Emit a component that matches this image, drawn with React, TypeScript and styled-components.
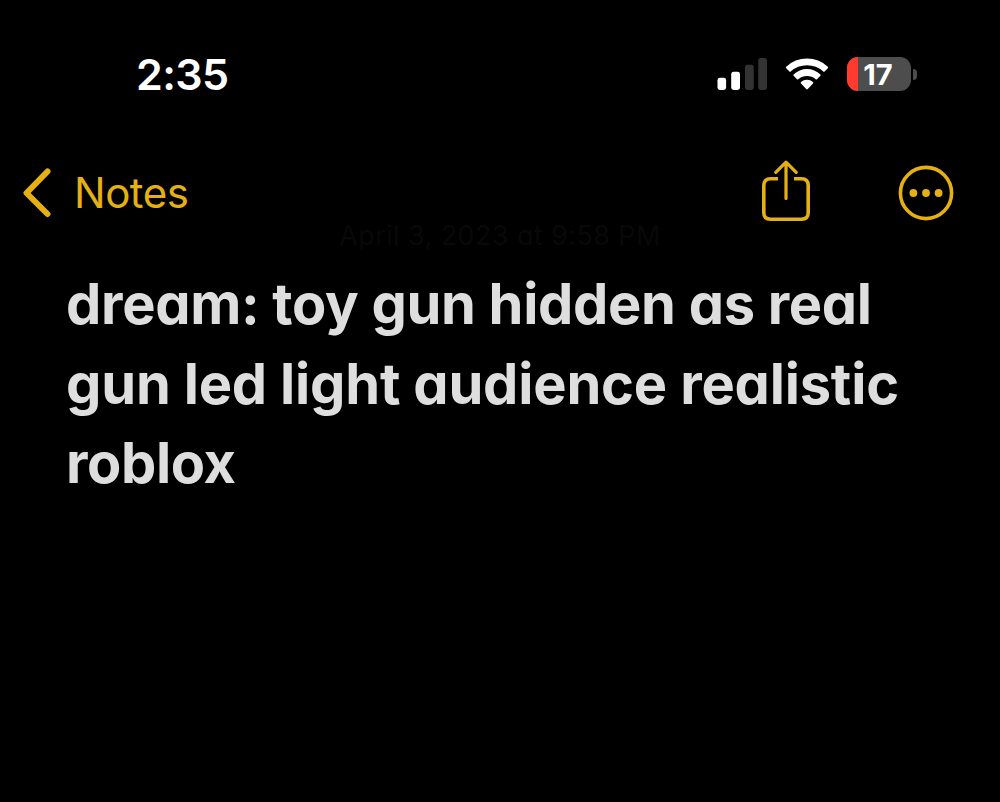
import styled, { createGlobalStyle } from "styled-components";

export default function App() {
    return (
        <>
            <GlobalStyle />
            <Screen>
                <StatusBar>
                    <Time>2:35</Time>
                    <StatusIcons>
                        <SignalIcon />
                        <WifiIcon />
                        <Battery level={17} />
                    </StatusIcons>
                </StatusBar>
                <NavBar>
                    <BackButton>
                        <svg width="30" height="50" viewBox="0 0 30 50" fill="none">
                            <path d="M25.5 3.5L4.5 25L25.5 46" stroke="currentColor" strokeWidth="6" strokeLinecap="round" strokeLinejoin="round" />
                        </svg>
                        <BackLabel>Notes</BackLabel>
                    </BackButton>
                    <NavActions>
                        <IconButton aria-label="Share">
                            <ShareIcon />
                        </IconButton>
                        <IconButton aria-label="More">
                            <MoreIcon />
                        </IconButton>
                    </NavActions>
                </NavBar>
                <NoteDate>April 3, 2023 at 9:58 PM</NoteDate>
                <NoteTitle>
                    <TitleLine $spacing={-0.3}>dream: toy gun hidden as real</TitleLine>
                    <TitleLine $spacing={-0.18}>gun led light audience realistic</TitleLine>
                    <TitleLine $spacing={-0.4}>roblox</TitleLine>
                </NoteTitle>
            </Screen>
        </>
    )
}

function SignalIcon() {
    return (
        <svg width="51" height="34" viewBox="0 0 51 34">
            <rect x="0.5" y="20.8" width="8.6" height="12.2" rx="2.4" fill="#fff" />
            <rect x="14.2" y="14.8" width="8.8" height="18.2" rx="2.4" fill="#fff" />
            <rect x="28" y="7.8" width="8.8" height="25.2" rx="2.4" fill="#333" />
            <rect x="41.2" y="1" width="8.8" height="32" rx="2.4" fill="#333" />
        </svg>
    )
}

function WifiIcon() {
    return (
        <svg width="44" height="34" viewBox="0 0 44 34" fill="#fff">
            <path d="M1.2 9.8A30 30 0 0 1 42.8 9.8Q43.5 10.5 42.8 11.2L39.6 14.6Q39 15.2 38.3 14.6A24 24 0 0 0 5.7 14.6Q5 15.2 4.4 14.6L1.2 11.2Q0.5 10.5 1.2 9.8Z" />
            <path d="M8.6 17.4A19.5 19.5 0 0 1 35.4 17.4Q36.1 18.1 35.4 18.8L32 22.2Q31.4 22.8 30.7 22.2A13.3 13.3 0 0 0 13.3 22.2Q12.6 22.8 12 22.2L8.6 18.8Q7.9 18.1 8.6 17.4Z" />
            <path d="M16 25.1A9 9 0 0 1 28 25.1Q28.7 25.8 28 26.5L22.8 32Q22 32.8 21.2 32L16 26.5Q15.3 25.8 16 25.1Z" />
        </svg>
    )
}

function Battery(props: {level: number}) {
    return (
        <BatteryContainer>
            <BatteryBody>
                <BatteryFill style={{width: `${props.level}%`}} />
                <BatteryLevel>{props.level}</BatteryLevel>
            </BatteryBody>
            <BatteryTip />
        </BatteryContainer>
    )
}

function ShareIcon() {
    return (
        <svg width="50" height="62" viewBox="0 0 50 62" fill="none" stroke="currentColor" strokeWidth="3.6">
            <path d="M17 18.8H9.5Q2.8 18.8 2.8 25.5V52.5Q2.8 59.2 9.5 59.2H40.5Q47.2 59.2 47.2 52.5V25.5Q47.2 18.8 40.5 18.8H33" />
            <path d="M25 38.5V2.8M14.8 12.4L25 2.2L35.2 12.4" strokeWidth="3.2" strokeLinecap="round" strokeLinejoin="round" />
        </svg>
    )
}

function MoreIcon() {
    return (
        <svg width="56" height="56" viewBox="0 0 56 56">
            <circle cx="28" cy="28" r="25.6" fill="none" stroke="currentColor" strokeWidth="3.6" />
            <circle cx="15.4" cy="28" r="3.9" fill="currentColor" />
            <circle cx="28" cy="28" r="3.9" fill="currentColor" />
            <circle cx="40.6" cy="28" r="3.9" fill="currentColor" />
        </svg>
    )
}

const GlobalStyle = createGlobalStyle`
    body {
        margin: 0;
        background: #000;
    }
    svg {
        display: block;
        flex-shrink: 0;
    }
`

const Screen = styled.div`
    box-sizing: border-box;
    width: 1000px;
    height: 802px;
    overflow: hidden;
    background: #000;
    font-family: Inter, "Liberation Sans", sans-serif;
    font-feature-settings: "cv11" 1;
`

const StatusBar = styled.div`
    box-sizing: border-box;
    height: 148px;
    padding: 0 83px 0 136px;
    display: flex;
    align-items: center;
    justify-content: space-between;
`

const Time = styled.div`
    color: #fff;
    font-size: 43px;
    font-weight: 600;
    line-height: 52px;
    letter-spacing: -0.6px;
    margin-bottom: 1px;
`

const StatusIcons = styled.div`
    display: flex;
    align-items: center;
    svg + svg {
        margin: 0 18px 0 17px;
    }
`

const BatteryContainer = styled.div`
    display: flex;
    align-items: center;
    gap: 2px;
`

const BatteryBody = styled.div`
    position: relative;
    width: 64px;
    height: 34px;
    border-radius: 11px;
    overflow: hidden;
    background: #4d4d4d;
`

const BatteryFill = styled.div`
    height: 100%;
    background: #ff3b30;
`

const BatteryLevel = styled.span`
    position: absolute;
    inset: 0 2px 0 0;
    color: #fff;
    font-size: 29px;
    font-weight: 700;
    line-height: 35px;
    text-align: center;
`

const BatteryTip = styled.div`
    width: 4px;
    height: 11px;
    border-radius: 0 5px 5px 0;
    background: #4d4d4d;
`

const NavBar = styled.div`
    height: 74px;
    padding: 0 46px 0 22px;
    display: flex;
    align-items: flex-start;
    justify-content: space-between;
    color: #e5b012;
`

const BackButton = styled.button`
    display: flex;
    align-items: center;
    gap: 20px;
    margin-top: 20px;
    padding: 0;
    border: 0;
    background: none;
    color: inherit;
    font: inherit;
`

const BackLabel = styled.span`
    margin-left: 2px;
    font-size: 42px;
    line-height: 50px;
    letter-spacing: -0.5px;
`

const NavActions = styled.div`
    display: flex;
    align-items: center;
    gap: 87px;
    margin-top: 12px;
`

const IconButton = styled.button`
    display: flex;
    padding: 0;
    border: 0;
    background: none;
    color: inherit;
    &:last-child {
        margin-top: 4px;
    }
`

const NoteDate = styled.div`
    height: 43px;
    color: #080808;
    font-size: 27px;
    line-height: 27px;
    text-align: center;
    letter-spacing: 0.4px;
`

const NoteTitle = styled.h1`
    margin: 0;
    padding-left: 66px;
    color: #dedede;
    font-size: 56px;
    font-weight: 700;
    line-height: 79.5px;
`

const TitleLine = styled.span<{ $spacing: number }>`
    display: block;
    white-space: nowrap;
    letter-spacing: ${props => props.$spacing}px;
`
